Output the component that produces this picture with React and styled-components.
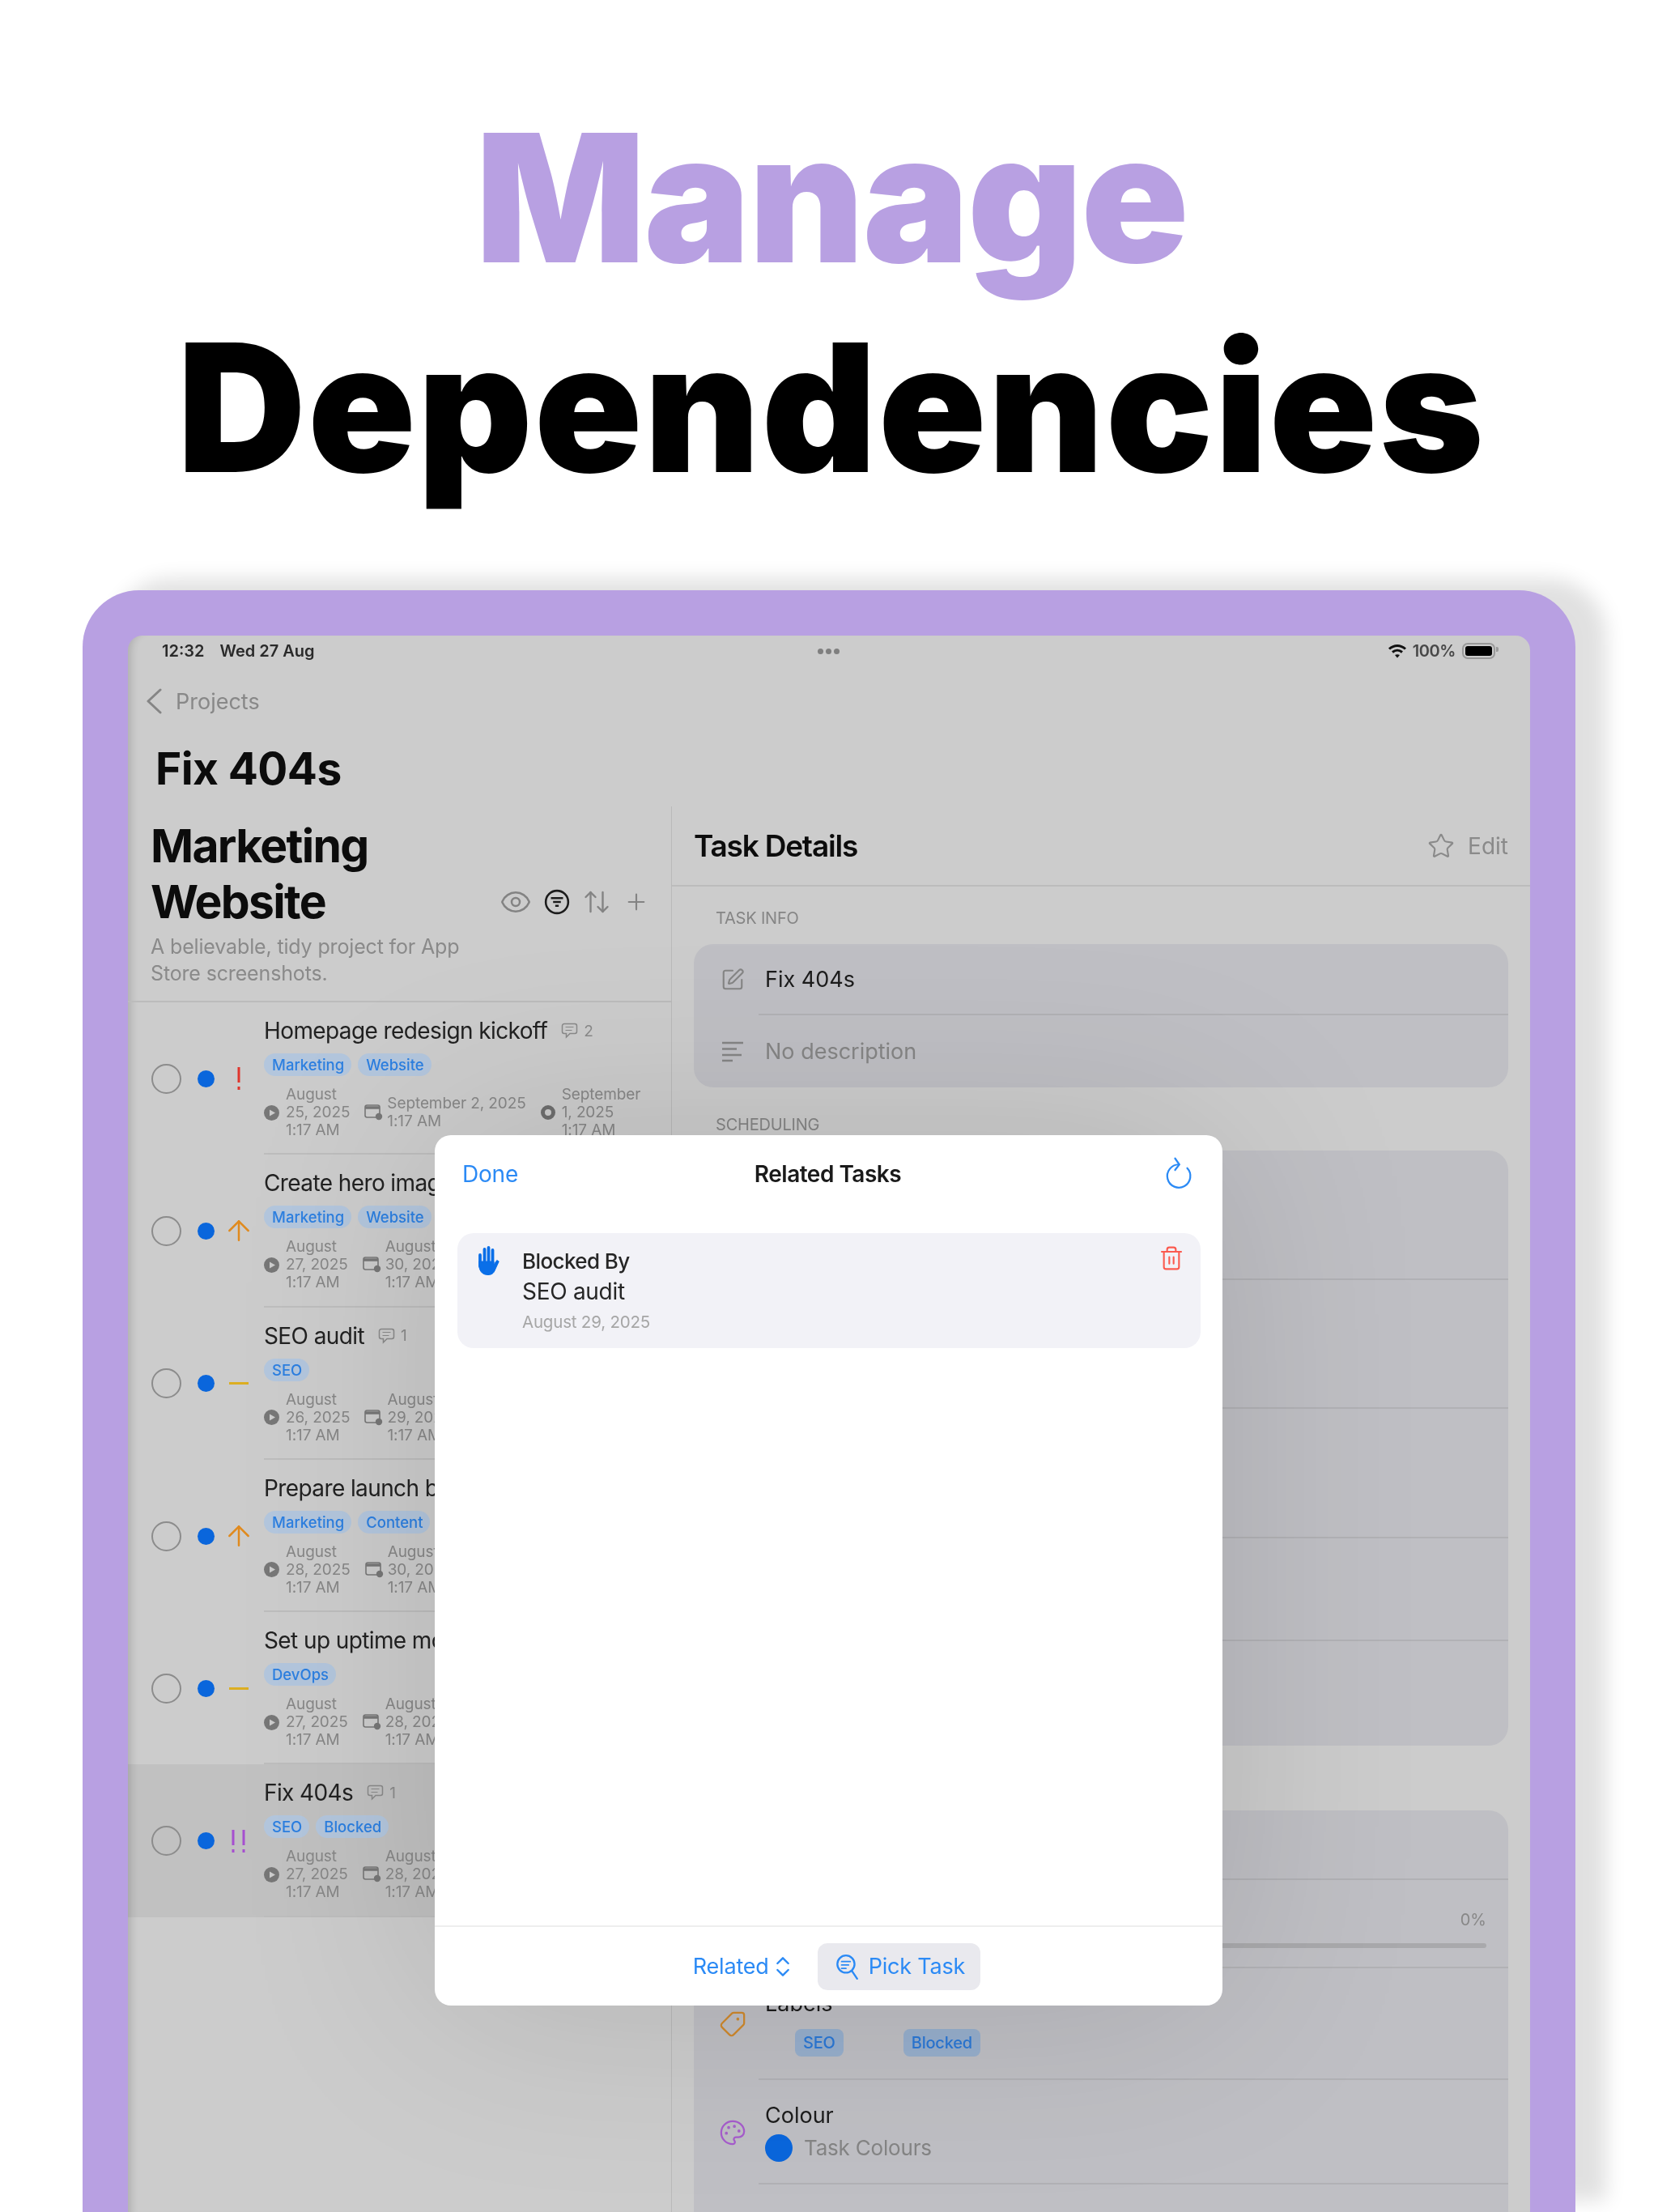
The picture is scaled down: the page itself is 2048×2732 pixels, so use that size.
import styled, { createGlobalStyle } from 'styled-components';
import {
    ArrowUp,
    ArrowUpDown,
    ChevronsUpDown,
    Eye,
    Palette,
    Plus,
    SquarePen,
    Star,
    Tag as TagIcon,
    Trash2,
} from 'lucide-react';

const GlobalStyle = createGlobalStyle`
    html, body {
        margin: 0;
        padding: 0;
        background: #fff;
    }
    * {
        box-sizing: border-box;
    }
`;

const Page = styled.div`
    width: 2048px;
    height: 2732px;
    overflow: hidden;
    background: #fff;
    font-family: Inter, 'Liberation Sans', sans-serif;
    display: flex;
    flex-direction: column;
`;

const Headline = styled.h1`
    margin: 0;
    height: 729px;
    flex: none;
    padding: 115px 0 0 6px;
    text-align: center;
    font-size: 220px;
    line-height: 259px;
    font-weight: 900;
    letter-spacing: 2.2px;
    color: #000;

    span {
        display: block;
        letter-spacing: -2px;
        color: #b8a0e2;
    }
`;

const Device = styled.div`
    flex: 1;
    margin: 0 102px;
    padding: 56px 56px 0 56px;
    background: #b8a0e2;
    border-radius: 70px 70px 0 0;
    box-shadow: 38px -14px 24px rgba(0, 0, 0, 0.12);
    display: flex;
    min-height: 0;
`;

const Screen = styled.div`
    position: relative;
    flex: 1;
    min-width: 0;
    background: #cccccc;
    border-radius: 18px 18px 0 0;
    box-shadow: inset 12px 0 10px -8px rgba(0, 0, 0, 0.14);
    overflow: hidden;
    display: flex;
    flex-direction: column;
    filter: blur(0.6px);
`;

const StatusBar = styled.div`
    height: 38px;
    flex: none;
    padding: 0 43px 0 42px;
    display: grid;
    grid-template-columns: 1fr auto 1fr;
    align-items: center;
    font-size: 20px;
    font-weight: 600;
    color: #2a2a2a;
`;

const StatusLeft = styled.div`
    display: flex;
    gap: 19px;
`;

const StatusDots = styled.div`
    display: flex;
    gap: 3px;

    i {
        width: 7px;
        height: 7px;
        border-radius: 50%;
        background: #7f7f7f;
    }
`;

const StatusRight = styled.div`
    display: flex;
    justify-content: flex-end;
    align-items: center;
    gap: 7px;
    letter-spacing: -0.4px;
    color: #484848;
`;

const Battery = styled.div`
    position: relative;
    width: 41px;
    height: 20px;
    margin-left: 1px;
    padding: 2px;
    border: 2px solid #999;
    border-radius: 7px;

    &::before {
        content: '';
        display: block;
        height: 100%;
        background: #000;
        border-radius: 3px;
    }

    &::after {
        content: '';
        position: absolute;
        right: -6px;
        top: 3px;
        width: 3px;
        height: 6px;
        border-radius: 0 2px 2px 0;
        background: #999;
    }
`;

const BackNav = styled.div`
    height: 86px;
    flex: none;
    padding-left: 22px;
    display: flex;
    align-items: center;
    gap: 17px;
    font-size: 27px;
    color: #888;
`;

const ScreenTitle = styled.div`
    height: 87px;
    flex: none;
    padding: 0 0 8px 34px;
    display: flex;
    align-items: center;
    font-size: 55px;
    font-weight: 700;
    letter-spacing: -0.6px;
    color: #0c0c0c;
`;

const Split = styled.div`
    flex: 1;
    display: flex;
    min-height: 0;
`;

const LeftPane = styled.div`
    width: 672px;
    flex: none;
    border-right: 1px solid #b9b9b9;
    display: flex;
    flex-direction: column;
`;

const ProjectHeader = styled.div`
    height: 242px;
    flex: none;
    padding: 14px 27px 0 28px;
    border-bottom: 2px solid #bcbcbc;
`;

const ProjectTop = styled.div`
    display: flex;
    justify-content: space-between;
`;

const ProjectName = styled.h2`
    margin: 0;
    font-size: 57px;
    line-height: 69px;
    font-weight: 700;
    letter-spacing: -1.7px;
    color: #0c0c0c;
`;

const ProjectActions = styled.div`
    align-self: flex-end;
    height: 69px;
    display: flex;
    align-items: center;
    gap: 15px;
    color: #838383;
`;

const ProjectBlurb = styled.p`
    margin: 5px 0 0;
    font-size: 25px;
    line-height: 33px;
    letter-spacing: -0.15px;
    color: #8a8a8a;
`;

const TaskRow = styled.div`
    height: 188.3px;
    flex: none;
    display: flex;
    background: ${props => (props.$selected ? 'rgba(0, 0, 0, 0.05)' : 'transparent')};
`;

const TaskMarks = styled.div`
    width: 168px;
    padding-left: 29px;
    display: flex;
    align-items: center;
`;

const CheckCircle = styled.div`
    width: 37px;
    height: 37px;
    border: 2px solid #8c8c8c;
    border-radius: 50%;
`;

const ColourDot = styled.div`
    width: 21px;
    height: 21px;
    margin-left: 20px;
    border-radius: 50%;
    background: #0a66dc;
`;

const PrioritySlot = styled.div`
    width: 28px;
    margin-left: 16px;
    display: flex;
    justify-content: center;
`;

const PriorityArrow = styled(ArrowUp)`
    flex: none;
`;

const PriorityDash = styled.div`
    width: 24px;
    height: 3px;
    background: #dcae22;
`;

const TaskBody = styled.div`
    flex: 1;
    min-width: 0;
    padding-top: 17px;
    border-bottom: 2px solid #bdbdbd;
`;

const TaskTitle = styled.div`
    height: 36px;
    display: flex;
    align-items: center;
    font-size: 28px;
    letter-spacing: -0.6px;
    white-space: nowrap;
    color: #222;
`;

const CommentCount = styled.div`
    margin-left: 17px;
    display: flex;
    align-items: center;
    gap: 7px;
    font-size: 19px;
    color: #8a8a8a;
`;

const TagRow = styled.div`
    margin-top: 10px;
    display: flex;
    gap: 8px;
`;

const Tag = styled.div`
    height: 28px;
    padding: 0 9px 0 10px;
    display: flex;
    align-items: center;
    border-radius: 14px;
    background: #b3c6dd;
    font-size: 18.5px;
    font-weight: 500;
    color: #2c7fe0;
`;

const DateRow = styled.div`
    margin-top: 12px;
    display: flex;
    align-items: center;
    gap: 18px;
`;

const DateItem = styled.div`
    display: flex;
    align-items: center;
    gap: ${props => (props.$wide ? 5 : 8)}px;
    font-size: 19px;
    line-height: 22px;
    letter-spacing: -0.1px;
    white-space: nowrap;
    color: #878787;
`;

const RightPane = styled.div`
    flex: 1;
    min-width: 0;
    overflow: hidden;
    display: flex;
    flex-direction: column;
`;

const DetailHeader = styled.div`
    height: 99px;
    flex: none;
    padding: 0 27px 0 27px;
    border-bottom: 2px solid #bcbcbc;
    display: flex;
    justify-content: space-between;
    align-items: center;
`;

const DetailTitle = styled.div`
    font-size: 37px;
    font-weight: 600;
    letter-spacing: -1.2px;
    color: #0c0c0c;
`;

const DetailActions = styled.div`
    display: flex;
    align-items: center;
    gap: 16px;
    font-size: 28px;
    color: #8a8a8a;
`;

const DetailBody = styled.div`
    flex: none;
    padding: 27px 27px 0;
`;

const SectionLabel = styled.div`
    height: 24px;
    margin: ${props => props.$top || 0}px 0 20px 27px;
    display: flex;
    align-items: center;
    font-size: 20px;
    letter-spacing: -0.2px;
    color: #858585;
`;

const Card = styled.div`
    margin-top: ${props => props.$top || 0}px;
    border-radius: 24px;
    background: #bfbfc4;
    overflow: hidden;
`;

const CardRow = styled.div`
    height: ${props => props.$height}px;
    display: flex;
`;

const RowIcon = styled.div`
    width: 80px;
    padding: ${props => props.$drop || 0}px 0 0 16px;
    display: flex;
    align-items: center;
    justify-content: center;
    color: #858585;
`;

const RowContent = styled.div`
    flex: 1;
    min-width: 0;
    padding-left: 8px;
    border-bottom: ${props => (props.$last ? 'none' : '2px solid #b1b1b5')};
    display: flex;
    flex-direction: column;
    justify-content: center;
    font-size: 27px;
    color: ${props => (props.$muted ? '#858585' : '#1c1c1c')};
`;

const ProgressRow = styled.div`
    padding: 13px 27px 0 0;
    display: flex;
    flex-direction: column;
    align-items: flex-end;
    gap: 17px;
    font-size: 20px;
    color: #888;

    &::after {
        content: '';
        width: 100%;
        height: 6px;
        border-radius: 3px;
        background: #a9a9ac;
    }
`;

const LabelsContent = styled.div`
    padding: 26px 0 0 8px;
    flex: 1;
    border-bottom: 2px solid #b1b1b5;
    font-size: 27px;
    line-height: 36px;
    color: #1c1c1c;
`;

const LabelPills = styled.div`
    margin: 13px 0 0 37px;
    display: flex;
    gap: 74px;
`;

const LabelPill = styled.div`
    height: 34px;
    padding: 0 10px;
    display: flex;
    align-items: center;
    border-radius: 8px;
    background: #97afcd;
    font-size: 20px;
    font-weight: 500;
    letter-spacing: -0.2px;
    color: #2b78d6;
`;

const ColourValue = styled.div`
    margin-top: 7px;
    display: flex;
    align-items: center;
    gap: 14px;
    font-size: 26px;
    letter-spacing: -0.2px;
    color: #858585;

    &::before {
        content: '';
        width: 34px;
        height: 34px;
        border-radius: 50%;
        background: #0a66dc;
    }
`;

const Modal = styled.div`
    position: absolute;
    left: 379px;
    top: 617px;
    width: 973px;
    height: 1075px;
    border-radius: 20px;
    background: #fff;
    box-shadow: 0 0 260px rgba(0, 0, 0, 0.13);
    display: flex;
    flex-direction: column;
`;

const ModalHeader = styled.div`
    height: 121px;
    padding: 0 36px 26px 34px;
    display: grid;
    grid-template-columns: 1fr auto 1fr;
    align-items: center;
`;

const ModalDone = styled.div`
    font-size: 28px;
    letter-spacing: -0.2px;
    color: #2b8af5;
`;

const ModalTitle = styled.div`
    font-size: 28px;
    font-weight: 600;
    letter-spacing: -0.5px;
    color: #1a1a1a;
`;

const ModalRefresh = styled.div`
    display: flex;
    justify-content: flex-end;
`;

const ModalBody = styled.div`
    flex: 1;
    padding: 0 27px 0 28px;
`;

const RelatedCard = styled.div`
    height: 142px;
    padding: 15px 20px 0 25px;
    border-radius: 20px;
    background: #f2f2f7;
    display: flex;
    gap: 27px;
`;

const RelatedText = styled.div`
    flex: 1;
`;

const RelatedKind = styled.div`
    height: 38px;
    display: flex;
    align-items: center;
    font-size: 26px;
    font-weight: 500;
    letter-spacing: -0.6px;
    color: #262626;
`;

const RelatedName = styled.div`
    height: 38px;
    display: flex;
    align-items: center;
    font-size: 28px;
    letter-spacing: -0.3px;
    color: #262626;
`;

const RelatedDate = styled.div`
    height: 36px;
    display: flex;
    align-items: center;
    font-size: 20.5px;
    letter-spacing: -0.2px;
    color: #a6a6a6;
`;

const ModalFooter = styled.div`
    height: 99px;
    padding-left: 20px;
    border-top: 2px solid #eeeeee;
    display: flex;
    justify-content: center;
    align-items: center;
    gap: 27px;
    font-size: 27px;
    letter-spacing: -0.2px;
    color: #2b8af5;
`;

const FooterMenu = styled.div`
    display: flex;
    align-items: center;
    gap: 1px;
`;

const FooterButton = styled.div`
    height: 58px;
    padding: 0 19px 0 22px;
    display: flex;
    align-items: center;
    gap: 13px;
    border-radius: 12px;
    background: #e9e9ee;
`;

const Wifi = () => (
    <svg width="24" height="20" viewBox="0 0 24 20" fill="none" stroke="#111" strokeWidth="3">
        <path d="M2 7.500C8 2 16 2 22 7.500" />
        <path d="M6 11.500c3.600-3 8.400-3 12 0" />
        <path d="M12 18.500l-3-3.400c1.800-1.300 4.200-1.300 6 0z" fill="#111" stroke="none" />
    </svg>
);

const BackChevron = () => (
    <svg width="20" height="32" viewBox="0 0 20 32" fill="none" stroke="#858585" strokeWidth="3" strokeLinecap="round" strokeLinejoin="round">
        <path d="M18 2L3 16l15 14" />
    </svg>
);

const FilterCircle = () => (
    <svg width="32" height="32" viewBox="0 0 30 30" fill="none" stroke="#1c1c1c" strokeWidth="2.400">
        <circle cx="15" cy="15" r="13" />
        <path d="M8 10.500h14M10.500 15h9M13 19.500h4" />
    </svg>
);

const ExclaimIcon = ({ color, count }) => (
    <svg width={count === 2 ? 22 : 8} height="30" viewBox={count === 2 ? '0 0 22 30' : '0 0 8 30'} fill={color}>
        <rect x="2.500" y="1" width="3" height="19" />
        <rect x="2.500" y="25" width="3" height="4" />
        {count === 2 && <rect x="15.500" y="1" width="3" height="19" />}
        {count === 2 && <rect x="15.500" y="25" width="3" height="4" />}
    </svg>
);

const CommentIcon = () => (
    <svg width="21" height="20" viewBox="0 0 21 20" fill="none" stroke="#8a8a8a" strokeWidth="1.500">
        <path d="M4 1.500h13a2.500 2.500 0 0 1 2.500 2.500v7a2.500 2.500 0 0 1-2.500 2.500h-6L6.500 18v-4.500H4A2.500 2.500 0 0 1 1.500 11V4A2.500 2.500 0 0 1 4 1.500z" />
        <path d="M5.500 5.500h10M5.500 9.500h8" strokeWidth="1.200" />
    </svg>
);

const StartIcon = () => (
    <svg width="19" height="19" viewBox="0 0 19 19" style={{ flex: 'none' }}>
        <circle cx="9.500" cy="9.500" r="9.500" fill="#777" />
        <path d="M7 5.500l7 4-7 4z" fill="#ccc" />
    </svg>
);

const DueIcon = () => (
    <svg width="23" height="20" viewBox="0 0 23 20" fill="none" style={{ flex: 'none' }}>
        <rect x="1" y="1" width="18" height="15" rx="2.500" stroke="#777" strokeWidth="1.600" />
        <path d="M1 4h18" stroke="#777" strokeWidth="3.500" />
        <circle cx="18" cy="15" r="4.200" fill="#777" />
    </svg>
);

const TargetIcon = () => (
    <svg width="18" height="18" viewBox="0 0 18 18" style={{ flex: 'none' }}>
        <circle cx="9" cy="9" r="6.500" fill="#ccc" stroke="#6e6e6e" strokeWidth="5" />
    </svg>
);

const NotesIcon = () => (
    <svg width="30" height="28" viewBox="0 0 30 28" fill="none" stroke="#858585" strokeWidth="2.400">
        <path d="M2 3h26M2 10.500h18M2 18h24M2 25h13" />
    </svg>
);

const RefreshIcon = () => (
    <svg width="36" height="45" viewBox="0 0 24 30" fill="none" stroke="#2b8af5" strokeWidth="1.500" strokeLinecap="round">
        <path d="M19 10.500A9.500 9.500 0 1 1 12 7.500" />
        <path d="M9 2.500l3.500 5-3.500 4.500" />
    </svg>
);

const HandIcon = () => (
    <svg width="28" height="38" viewBox="0 0 28 38" fill="#0a6fe8" stroke="#0a6fe8" strokeLinecap="round" style={{ flex: 'none' }}>
        <path d="M3 12v14M8.500 5v16M13.500 3v18M18.500 6v16" fill="none" strokeWidth="3.800" />
        <path d="M2 20h18v4l3.800-5.500 2.400 1.500-5 11c-1.500 4-4.500 5.500-8.200 5.500-6 0-10-3-11-9.500z" strokeWidth="1" />
    </svg>
);

const PickIcon = () => (
    <svg width="28" height="34" viewBox="0 0 26 32" fill="none" stroke="#2b8af5" strokeWidth="2.200" strokeLinecap="round">
        <circle cx="12" cy="13" r="10" />
        <path d="M19 21l6 9" />
        <path d="M7 10h10M7 14h8M7 18h5" strokeWidth="1.800" />
    </svg>
);

const dateIcons = { start: StartIcon, due: DueIcon, target: TargetIcon };

const tasks = [
    {
        title: 'Homepage redesign kickoff',
        comments: 2,
        priority: 'high',
        tags: ['Marketing', 'Website'],
        dates: [
            { icon: 'start', lines: ['August', '25, 2025', '1:17 AM'] },
            { icon: 'due', lines: ['September 2, 2025', '1:17 AM'] },
            { icon: 'target', lines: ['September', '1, 2025', '1:17 AM'] },
        ],
    },
    {
        title: 'Create hero images',
        priority: 'up',
        tags: ['Marketing', 'Website'],
        dates: [
            { icon: 'start', lines: ['August', '27, 2025', '1:17 AM'] },
            { icon: 'due', lines: ['August', '30, 2025', '1:17 AM'] },
        ],
    },
    {
        title: 'SEO audit',
        comments: 1,
        priority: 'medium',
        tags: ['SEO'],
        dates: [
            { icon: 'start', lines: ['August', '26, 2025', '1:17 AM'] },
            { icon: 'due', lines: ['August', '29, 2025', '1:17 AM'] },
        ],
    },
    {
        title: 'Prepare launch blog',
        priority: 'up',
        tags: ['Marketing', 'Content'],
        dates: [
            { icon: 'start', lines: ['August', '28, 2025', '1:17 AM'] },
            { icon: 'due', lines: ['August', '30, 2025', '1:17 AM'] },
        ],
    },
    {
        title: 'Set up uptime monitoring',
        priority: 'medium',
        tags: ['DevOps'],
        dates: [
            { icon: 'start', lines: ['August', '27, 2025', '1:17 AM'] },
            { icon: 'due', lines: ['August', '28, 2025', '1:17 AM'] },
        ],
    },
    {
        title: 'Fix 404s',
        comments: 1,
        priority: 'urgent',
        selected: true,
        tags: ['SEO', 'Blocked'],
        dates: [
            { icon: 'start', lines: ['August', '27, 2025', '1:17 AM'] },
            { icon: 'due', lines: ['August', '28, 2025', '1:17 AM'] },
        ],
    },
];

const Priority = ({ level }) => {
    switch (level) {
        case 'high':
            return <ExclaimIcon color="#e0352c" count={1} />;
        case 'urgent':
            return <ExclaimIcon color="#a64fcf" count={2} />;
        case 'up':
            return <PriorityArrow size={40} color="#e08a1e" strokeWidth={1.5} />;
        default:
            return <PriorityDash />;
    }
};

const Task = ({ task }) => (
    <TaskRow $selected={task.selected}>
        <TaskMarks>
            <CheckCircle />
            <ColourDot />
            <PrioritySlot>
                <Priority level={task.priority} />
            </PrioritySlot>
        </TaskMarks>
        <TaskBody>
            <TaskTitle>
                {task.title}
                {task.comments && (
                    <CommentCount>
                        <CommentIcon />
                        {task.comments}
                    </CommentCount>
                )}
            </TaskTitle>
            <TagRow>
                {task.tags.map(tag => (
                    <Tag key={tag}>{tag}</Tag>
                ))}
            </TagRow>
            <DateRow>
                {task.dates.map(date => {
                    const DateIcon = dateIcons[date.icon];
                    return (
                        <DateItem key={date.icon} $wide={date.icon === 'due'}>
                            <DateIcon />
                            <div>
                                {date.lines.map(line => (
                                    <div key={line}>{line}</div>
                                ))}
                            </div>
                        </DateItem>
                    );
                })}
            </DateRow>
        </TaskBody>
    </TaskRow>
);

const App = () => (
    <Page>
        <GlobalStyle />
        <Headline>
            <span>Manage</span>
            Dependencies
        </Headline>
        <Device>
            <Screen>
                <StatusBar>
                    <StatusLeft>
                        <div>12:32</div>
                        <div>Wed 27 Aug</div>
                    </StatusLeft>
                    <StatusDots>
                        <i />
                        <i />
                        <i />
                    </StatusDots>
                    <StatusRight>
                        <Wifi />
                        <div>100%</div>
                        <Battery />
                    </StatusRight>
                </StatusBar>
                <BackNav>
                    <BackChevron />
                    Projects
                </BackNav>
                <ScreenTitle>Fix 404s</ScreenTitle>
                <Split>
                    <LeftPane>
                        <ProjectHeader>
                            <ProjectTop>
                                <ProjectName>
                                    Marketing
                                    <br />
                                    Website
                                </ProjectName>
                                <ProjectActions>
                                    <Eye size={40} strokeWidth={1.5} />
                                    <FilterCircle />
                                    <ArrowUpDown size={36} strokeWidth={1.6} />
                                    <Plus size={32} strokeWidth={1.6} />
                                </ProjectActions>
                            </ProjectTop>
                            <ProjectBlurb>
                                A believable, tidy project for App
                                <br />
                                Store screenshots.
                            </ProjectBlurb>
                        </ProjectHeader>
                        {tasks.map(task => (
                            <Task key={task.title} task={task} />
                        ))}
                    </LeftPane>
                    <RightPane>
                        <DetailHeader>
                            <DetailTitle>Task Details</DetailTitle>
                            <DetailActions>
                                <Star size={34} strokeWidth={1.5} />
                                Edit
                            </DetailActions>
                        </DetailHeader>
                        <DetailBody>
                            <SectionLabel>TASK INFO</SectionLabel>
                            <Card>
                                <CardRow $height={88}>
                                    <RowIcon>
                                        <SquarePen size={30} strokeWidth={1.7} />
                                    </RowIcon>
                                    <RowContent>Fix 404s</RowContent>
                                </CardRow>
                                <CardRow $height={89}>
                                    <RowIcon>
                                        <NotesIcon />
                                    </RowIcon>
                                    <RowContent $last $muted>
                                        No description
                                    </RowContent>
                                </CardRow>
                            </Card>
                            <SectionLabel $top={34}>SCHEDULING</SectionLabel>
                            <Card>
                                <CardRow $height={160}>
                                    <RowIcon />
                                    <RowContent />
                                </CardRow>
                                <CardRow $height={159}>
                                    <RowIcon />
                                    <RowContent />
                                </CardRow>
                                <CardRow $height={160}>
                                    <RowIcon />
                                    <RowContent />
                                </CardRow>
                                <CardRow $height={127}>
                                    <RowIcon />
                                    <RowContent />
                                </CardRow>
                                <CardRow $height={129}>
                                    <RowIcon />
                                    <RowContent $last />
                                </CardRow>
                            </Card>
                            <Card $top={80}>
                                <CardRow $height={86}>
                                    <RowIcon />
                                    <RowContent />
                                </CardRow>
                                <CardRow $height={109}>
                                    <RowIcon />
                                    <RowContent>
                                        <ProgressRow>0%</ProgressRow>
                                    </RowContent>
                                </CardRow>
                                <CardRow $height={138}>
                                    <RowIcon>
                                        <TagIcon size={34} strokeWidth={1.6} color="#d08a2e" style={{ transform: 'rotate(90deg)' }} />
                                    </RowIcon>
                                    <LabelsContent>
                                        Labels
                                        <LabelPills>
                                            <LabelPill>SEO</LabelPill>
                                            <LabelPill>Blocked</LabelPill>
                                        </LabelPills>
                                    </LabelsContent>
                                </CardRow>
                                <CardRow $height={129}>
                                    <RowIcon>
                                        <Palette size={34} strokeWidth={1.6} color="#a65ccc" />
                                    </RowIcon>
                                    <RowContent>
                                        Colour
                                        <ColourValue>Task Colours</ColourValue>
                                    </RowContent>
                                </CardRow>
                                <CardRow $height={129}>
                                    <RowIcon />
                                    <RowContent $last />
                                </CardRow>
                            </Card>
                        </DetailBody>
                    </RightPane>
                </Split>
                <Modal>
                    <ModalHeader>
                        <ModalDone>Done</ModalDone>
                        <ModalTitle>Related Tasks</ModalTitle>
                        <ModalRefresh>
                            <RefreshIcon />
                        </ModalRefresh>
                    </ModalHeader>
                    <ModalBody>
                        <RelatedCard>
                            <HandIcon />
                            <RelatedText>
                                <RelatedKind>Blocked By</RelatedKind>
                                <RelatedName>SEO audit</RelatedName>
                                <RelatedDate>August 29, 2025</RelatedDate>
                            </RelatedText>
                            <Trash2 size={32} strokeWidth={1.6} color="#fb5b50" />
                        </RelatedCard>
                    </ModalBody>
                    <ModalFooter>
                        <FooterMenu>
                            Related
                            <ChevronsUpDown size={32} strokeWidth={1.8} />
                        </FooterMenu>
                        <FooterButton>
                            <PickIcon />
                            Pick Task
                        </FooterButton>
                    </ModalFooter>
                </Modal>
            </Screen>
        </Device>
    </Page>
);

export default App;
